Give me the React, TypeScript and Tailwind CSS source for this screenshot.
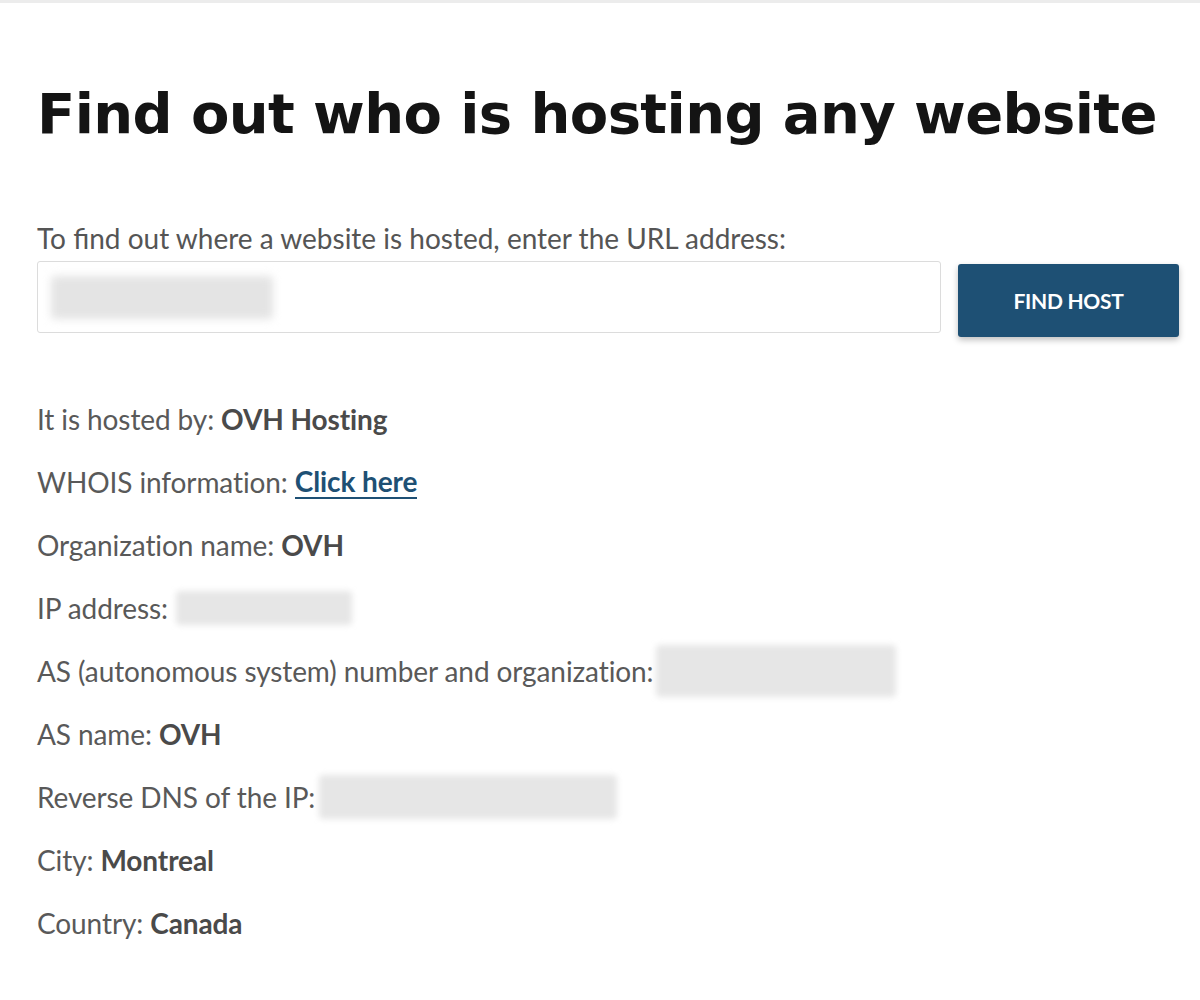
import { useState } from "react";

function Blur({ className }: { className: string }) {
  return <span className={`inline-block rounded-sm bg-[#e6e6e6] blur-[3px] align-middle ${className}`} />;
}

function Row({ label, children }: { label: string; children: React.ReactNode }) {
  return (
    <p className="flex h-[63px] items-center whitespace-nowrap">
      <span>{label}</span>
      {children}
    </p>
  );
}

export default function App() {
  const [url, setUrl] = useState("");

  return (
    <div className="min-h-screen border-t-[3px] border-[#ececec] bg-white font-['Lato','Liberation_Sans',sans-serif] text-[#555]">
      <div className="pl-[37px] pr-[21px] pt-[77px]">
        <h1 className="font-['DejaVu_Sans',sans-serif] text-[56px] font-bold leading-[1.2] tracking-[-0.6px] text-[#141414]">
          Find out who is hosting any website
        </h1>

        <form
          className="mt-[73px]"
          onSubmit={(e) => {
            e.preventDefault();
          }}
        >
          <label htmlFor="url" className="block text-[28px] leading-[36px]">
            To find out where a website is hosted, enter the URL address:
          </label>
          <div className="mt-[5px] flex items-start gap-[17px]">
            <div className="relative h-[72px] w-[904px] shrink-0 rounded-[3px] border border-[#dcdcdc] bg-white">
              <input
                id="url"
                value={url}
                onChange={(e) => setUrl(e.target.value)}
                className="h-full w-full bg-transparent px-3 text-[22px] outline-none"
              />
              {url.length === 0 && (
                <span className="pointer-events-none absolute left-[13px] top-[14px] h-[43px] w-[222px] rounded-sm bg-[#e4e4e4] blur-[4px]" />
              )}
            </div>
            <button
              type="submit"
              className="mt-[3px] h-[73px] w-[221px] shrink-0 rounded-[3px] bg-[#1e5074] text-[21px] font-bold tracking-[-0.3px] text-white shadow-[0_3px_6px_rgba(0,0,0,0.25)]"
            >
              FIND HOST
            </button>
          </div>
        </form>

        <div className="mt-[50px] text-[28px] tracking-[-0.1px] text-[#595959]">
          <Row label="It is hosted by:">
            <b className="ml-[7px] text-[#4a4a4a]">OVH Hosting</b>
          </Row>
          <Row label="WHOIS information:">
            <a href="#" className="ml-[7px] border-b-2 border-[#1e5074] font-bold leading-[32px] text-[#1e5074]">
              Click here
            </a>
          </Row>
          <Row label="Organization name:">
            <b className="ml-[7px] text-[#4a4a4a]">OVH</b>
          </Row>
          <Row label="IP address:">
            <Blur className="ml-[8px] h-[34px] w-[176px]" />
          </Row>
          <Row label="AS (autonomous system) number and organization:">
            <Blur className="ml-[3px] h-[52px] w-[240px]" />
          </Row>
          <Row label="AS name:">
            <b className="ml-[7px] text-[#4a4a4a]">OVH</b>
          </Row>
          <Row label="Reverse DNS of the IP:">
            <Blur className="ml-[4px] h-[44px] w-[298px]" />
          </Row>
          <Row label="City:">
            <b className="ml-[7px] text-[#4a4a4a]">Montreal</b>
          </Row>
          <Row label="Country:">
            <b className="ml-[7px] text-[#4a4a4a]">Canada</b>
          </Row>
        </div>
      </div>
    </div>
  );
}
